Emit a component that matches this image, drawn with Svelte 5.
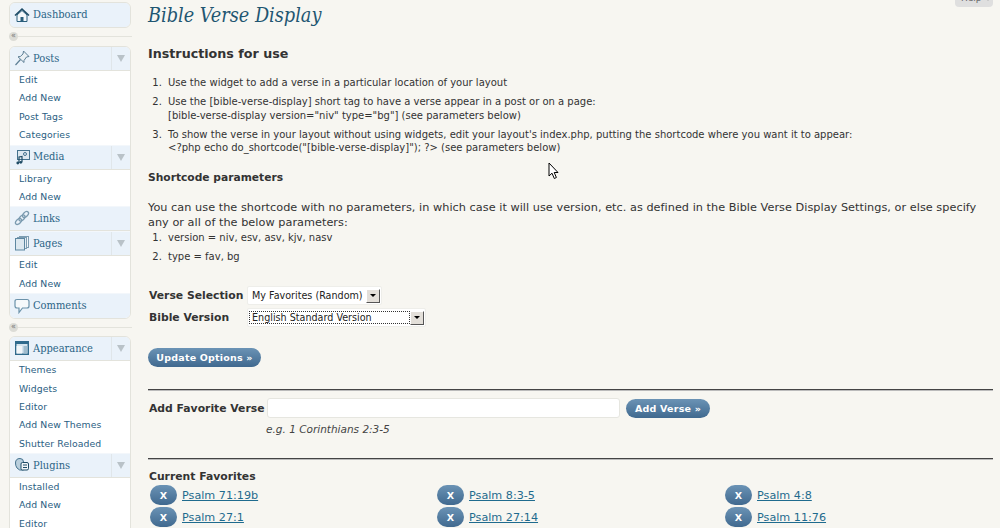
<script lang="ts">
	type MenuItem = { label: string; icon: string; subs?: string[] };

	const groups: MenuItem[][] = [
		[{ label: 'Dashboard', icon: 'home' }],
		[
			{ label: 'Posts', icon: 'pin', subs: ['Edit', 'Add New', 'Post Tags', 'Categories'] },
			{ label: 'Media', icon: 'media', subs: ['Library', 'Add New'] },
			{ label: 'Links', icon: 'link' },
			{ label: 'Pages', icon: 'pages', subs: ['Edit', 'Add New'] },
			{ label: 'Comments', icon: 'bubble' }
		],
		[
			{ label: 'Appearance', icon: 'layout', subs: ['Themes', 'Widgets', 'Editor', 'Add New Themes', 'Shutter Reloaded'] },
			{ label: 'Plugins', icon: 'plug', subs: ['Installed', 'Add New', 'Editor'] }
		]
	];

	const favorites = [
		['Psalm 71:19b', 'Psalm 8:3-5', 'Psalm 4:8'],
		['Psalm 27:1', 'Psalm 27:14', 'Psalm 11:76']
	];
</script>

{#snippet icon(name: string)}
	<svg class="icon" viewBox="0 0 16 16" width="16" height="16" aria-hidden="true">
		{#if name === 'home'}
			<path d="M3 8 V14.5 H13 V8 L8 3.5 Z" fill="#f4f8fb" stroke="#2b5f7c" />
			<path d="M1 8.5 L8 2 L15 8.5" fill="none" stroke="#1f4c66" stroke-width="1.6" />
			<rect x="6.5" y="10" width="3" height="4.5" fill="#2b5f7c" />
		{:else if name === 'pin'}
			<path d="M9.5 1 L15 6.5 L12.5 7 L10 10.5 L10 12.5 L4 6.8 L6.3 6.5 L9 4 Z" fill="#eaf0f4" stroke="#5d7f95" />
			<path d="M6.5 9.5 L1.5 15" stroke="#5d7f95" stroke-width="1.2" />
		{:else if name === 'media'}
			<rect x="3.5" y="1.5" width="12" height="9" fill="#dce8f0" stroke="#44728e" />
			<circle cx="11" cy="5" r="1.5" fill="none" stroke="#44728e" />
			<path d="M5 14 V8 L8 7.5 V13" fill="none" stroke="#1f4c66" stroke-width="1.2" />
			<circle cx="3.8" cy="14" r="1.4" fill="#1f4c66" />
			<circle cx="6.8" cy="13.3" r="1.4" fill="#1f4c66" />
		{:else if name === 'link'}
			<g fill="none" stroke="#7b9bb0" stroke-width="1.3">
				<ellipse cx="11.5" cy="4.5" rx="3.6" ry="2.2" transform="rotate(-45 11.5 4.5)" />
				<ellipse cx="8" cy="8" rx="3.6" ry="2.2" transform="rotate(-45 8 8)" />
				<ellipse cx="4.5" cy="11.5" rx="3.6" ry="2.2" transform="rotate(-45 4.5 11.5)" />
			</g>
		{:else if name === 'pages'}
			<rect x="5.5" y="1.5" width="9" height="11" fill="#f2f6f9" stroke="#7d9db2" />
			<rect x="3.5" y="2.5" width="9" height="11" fill="#e6eef4" stroke="#7d9db2" />
			<rect x="1.5" y="3.5" width="9" height="11.5" fill="#dce8f0" stroke="#5d87a1" />
		{:else if name === 'bubble'}
			<path d="M3 1.5 H13 Q15 1.5 15 3.5 V8 Q15 10 13 10 H8.5 L5 14.5 V10 H3 Q1 10 1 8 V3.5 Q1 1.5 3 1.5 Z" fill="#f6f9fb" stroke="#6b92aa" stroke-width="1.2" />
		{:else if name === 'layout'}
			<rect x="1" y="1" width="14" height="14" fill="#2f6a8c" />
			<rect x="2.5" y="4" width="11" height="9.5" fill="#d5e4ee" />
			<rect x="2.5" y="6" width="5.5" height="7.5" fill="#f2f6f9" />
			<rect x="9.5" y="6" width="4" height="7.5" fill="#9fbccd" />
		{:else}
			<path d="M1.5 6 Q1.5 1.5 6 1.5 Q9.5 1.5 9.5 5 V13 Q5 14 3 11 Q1.5 9 1.5 6 Z" fill="#b9cfdd" stroke="#44728e" />
			<rect x="7" y="5.5" width="7.5" height="7.5" rx="1.5" fill="#f2f6f9" stroke="#1f4c66" />
			<path d="M9 8 H13 M9 10.5 H13" stroke="#1f4c66" />
		{/if}
	</svg>
{/snippet}

<div class="page">
	<aside class="sidebar">
		{#each groups as group, g}
			<nav class="menu">
				{#each group as item}
					<div class="head">
						<span class="head-label">
							{@render icon(item.icon)}
							<span>{item.label}</span>
						</span>
						{#if item.subs}
							<span class="toggle"><i class="arrow"></i></span>
						{/if}
					</div>
					{#if item.subs}
						<ul>
							{#each item.subs as sub}
								<li>{sub}</li>
							{/each}
						</ul>
					{/if}
				{/each}
			</nav>
			{#if g < groups.length - 1}
				<div class="separator" class:tight={g === 1}><span class="collapse">«</span></div>
			{/if}
		{/each}
	</aside>

	<main class="content">
		<h2 class="title">Bible Verse Display</h2>

		<h3 class="instructions">Instructions for use</h3>
		<ol class="steps">
			<li>Use the widget to add a verse in a particular location of your layout</li>
			<li>Use the [bible-verse-display] short tag to have a verse appear in a post or on a page:<br />[bible-verse-display version="niv" type="bg"] (see parameters below)</li>
			<li>To show the verse in your layout without using widgets, edit your layout's index.php, putting the shortcode where you want it to appear:<br />&lt;?php echo do_shortcode("[bible-verse-display]"); ?&gt; (see parameters below)</li>
		</ol>

		<h4 class="params">Shortcode parameters</h4>
		<p class="intro">You can use the shortcode with no parameters, in which case it will use version, etc. as defined in the Bible Verse Display Settings, or else specify any or all of the below parameters:</p>
		<ol class="steps compact">
			<li>version = niv, esv, asv, kjv, nasv</li>
			<li>type = fav, bg</li>
		</ol>

		<div class="options">
			<div class="option">
				<span class="opt-label">Verse Selection</span>
				<span class="select first"><span class="value">My Favorites (Random)</span><span class="drop"><i></i></span></span>
			</div>
			<div class="option">
				<span class="opt-label">Bible Version</span>
				<span class="select second"><span class="value focused">English Standard Version</span><span class="drop"><i></i></span></span>
			</div>
		</div>

		<button class="btn update">Update Options »</button>

		<hr class="rule one" />

		<div class="add">
			<span class="add-label">Add Favorite Verse</span>
			<span class="verse-input"></span>
			<button class="btn">Add Verse »</button>
		</div>
		<p class="example">e.g. 1 Corinthians 2:3-5</p>

		<hr class="rule two" />

		<div class="current">Current Favorites</div>
		<div class="favorites">
			{#each favorites as row}
				{#each row as verse}
					<div class="fav">
						<button class="btn remove">X</button>
						<a href="#top">{verse}</a>
					</div>
				{/each}
			{/each}
		</div>
	</main>

	<div class="help">Help <i></i></div>

	<svg class="cursor" viewBox="0 0 12 18" width="12" height="18" aria-hidden="true">
		<path d="M1 1 V14 L4 11.2 L6.3 16.5 L8.4 15.5 L6.2 10.5 H10 Z" fill="#fff" stroke="#000" stroke-width="1" />
	</svg>
</div>

<style>
	:global(body) {
		margin: 0;
		background: #f7f6f1;
		overflow: hidden;
	}

	.page {
		position: relative;
		display: flex;
		width: 1000px;
		height: 528px;
		overflow: hidden;
		font-family: "DejaVu Sans", sans-serif;
		font-size: 10px;
		color: #333;
		background: #f7f6f1;
	}

	.sidebar {
		flex: none;
		width: 122px;
		margin: 2px 17px 0 9px;
	}

	.menu {
		border: 1px solid #e3e3dc;
		border-radius: 6px;
		overflow: hidden;
		background: #fff;
	}

	.head {
		display: flex;
		justify-content: space-between;
		height: 23px;
		background: #eaf2fa;
		border-top: 1px solid #f3f7fb;
		border-bottom: 1px solid #e3e3dc;
	}

	.menu .head:first-child {
		border-top: none;
	}

	.menu .head:last-child {
		border-bottom: none;
		height: 24px;
	}

	.head-label {
		display: flex;
		align-items: center;
		gap: 3px;
		padding: 0 0 1px 4px;
		font-family: "DejaVu Serif Condensed", "DejaVu Serif", serif;
		font-stretch: condensed;
		font-size: 11px;
		color: #2b6486;
	}

	.icon {
		flex: none;
	}

	.toggle {
		display: flex;
		align-items: center;
		justify-content: center;
		width: 18px;
		border-left: 1px solid #e0e6ea;
	}

	.arrow {
		width: 0;
		height: 0;
		border-left: 4px solid transparent;
		border-right: 4px solid transparent;
		border-top: 7px solid #b9c2c8;
	}

	ul {
		list-style: none;
		margin: 0;
		padding: 0;
		background: #fff;
	}

	li {
		height: 18.4px;
		line-height: 18.4px;
		padding-left: 9px;
		font-size: 9.3px;
		letter-spacing: 0.1px;
		color: #2a6082;
	}

	.separator {
		position: relative;
		height: 18px;
		margin-right: -1px;
	}

	.separator.tight {
		height: 17px;
	}

	.separator::before {
		content: '';
		position: absolute;
		left: 0;
		right: 0;
		top: 8px;
		border-top: 1px solid #e3e3dc;
	}

	.collapse {
		position: absolute;
		left: 0;
		top: 4px;
		width: 9px;
		height: 9px;
		border-radius: 50%;
		background: #dcdcd6;
		font-size: 8px;
		line-height: 8px;
		text-align: center;
		color: #777;
	}

	.content {
		flex: none;
		width: 845px;
	}

	.title {
		margin: 4px 0 0;
		font-family: "DejaVu Serif Condensed", "DejaVu Serif", serif;
		font-stretch: condensed;
		font-style: italic;
		font-weight: 400;
		font-size: 19.7px;
		line-height: 24px;
		color: #1f5672;
	}

	.instructions {
		margin: 18px 0 0;
		font-size: 12.7px;
		line-height: 16px;
		font-weight: 700;
		color: #333;
	}

	.steps {
		margin: 14px 0 0;
		padding: 0 0 0 17px;
		font-size: 10px;
	}

	.steps li {
		height: auto;
		padding: 0 0 0 3px;
		margin-bottom: 5.5px;
		font-size: 10px;
		letter-spacing: 0;
		line-height: 13.5px;
		color: #333;
		list-style: decimal;
	}

	.params {
		margin: 16px 0 0;
		font-size: 10.7px;
		line-height: 14px;
		font-weight: 700;
	}

	.intro {
		margin: 15px 0 0;
		font-size: 11.27px;
		letter-spacing: 0.03px;
		line-height: 15px;
	}

	.steps.compact {
		margin-top: 1px;
	}

	.options {
		margin: 23px 0 0 1px;
		display: flex;
		flex-direction: column;
		gap: 3px;
	}

	.option {
		display: flex;
		align-items: center;
	}

	.opt-label {
		width: 98px;
		font-size: 10.8px;
		font-weight: 700;
		color: #333;
	}

	.select {
		display: flex;
		align-items: center;
		justify-content: space-between;
		height: 15px;
		padding: 1px 1px 1px 4px;
		background: #fff;
		border: 1px solid #eeeeea;
		border-radius: 2px;
		font-size: 9.6px;
		color: #222;
	}

	.select.first {
		width: 128px;
	}

	.select.second {
		width: 175px;
		padding-left: 1px;
	}

	.value {
		white-space: nowrap;
	}

	.value.focused {
		flex: 1;
		padding-left: 2px;
		border: 1px dotted #333;
	}

	.drop {
		display: flex;
		align-items: center;
		justify-content: center;
		flex: none;
		width: 12px;
		height: 12px;
		background: #e3dfd9;
		border: 1px solid;
		border-color: #fff #555 #555 #fff;
	}

	.drop i {
		width: 0;
		height: 0;
		border-left: 3px solid transparent;
		border-right: 3px solid transparent;
		border-top: 3px solid #000;
	}

	.btn {
		border: none;
		border-radius: 11px;
		background: linear-gradient(#6b93b5, #40698f);
		color: #fff;
		font-family: "DejaVu Sans", sans-serif;
		font-size: 9.5px;
		font-weight: 700;
		letter-spacing: 0.2px;
		padding: 0;
	}

	.update {
		display: block;
		width: 113px;
		height: 19px;
		margin-top: 21px;
	}

	.rule {
		margin: 0;
		border: none;
		border-top: 1px solid #444;
		border-bottom: 1px solid #bbb;
	}

	.rule.one {
		margin-top: 22px;
	}

	.add {
		display: flex;
		align-items: center;
		margin: 7px 0 0 1px;
	}

	.add-label {
		width: 118px;
		font-size: 10.8px;
		font-weight: 700;
	}

	.verse-input {
		width: 351px;
		height: 18px;
		background: #fff;
		border: 1px solid #e6e6e0;
		border-radius: 3px;
	}

	.add .btn {
		width: 84px;
		height: 19px;
		margin-left: 6px;
	}

	.example {
		margin: 4px 0 0 118px;
		font-size: 10.5px;
		line-height: 14px;
		font-style: italic;
		color: #444;
	}

	.rule.two {
		margin-top: 22px;
	}

	.current {
		margin: 10px 0 0 1px;
		font-size: 10.8px;
		line-height: 14px;
		font-weight: 700;
	}

	.favorites {
		display: grid;
		grid-template-columns: 287px 288px 1fr;
		row-gap: 2px;
		margin: 1px 0 0 2px;
	}

	.fav {
		display: flex;
		align-items: center;
		gap: 5px;
	}

	.remove {
		width: 27px;
		height: 20px;
		font-size: 9.5px;
	}

	.fav a {
		font-size: 11.2px;
		color: #1f6b8e;
	}

	.help {
		position: absolute;
		top: -9px;
		left: 955px;
		width: 38px;
		height: 16px;
		box-sizing: border-box;
		padding-left: 6px;
		background: #dfdfdf;
		border-radius: 0 0 4px 4px;
		font-size: 9px;
		line-height: 14px;
		color: #666;
		white-space: nowrap;
	}

	.help i {
		display: inline-block;
		width: 0;
		height: 0;
		margin-left: 1px;
		border-left: 3px solid transparent;
		border-right: 3px solid transparent;
		border-top: 4px solid #aaa;
	}

	.cursor {
		position: absolute;
		left: 548px;
		top: 162px;
	}
</style>
